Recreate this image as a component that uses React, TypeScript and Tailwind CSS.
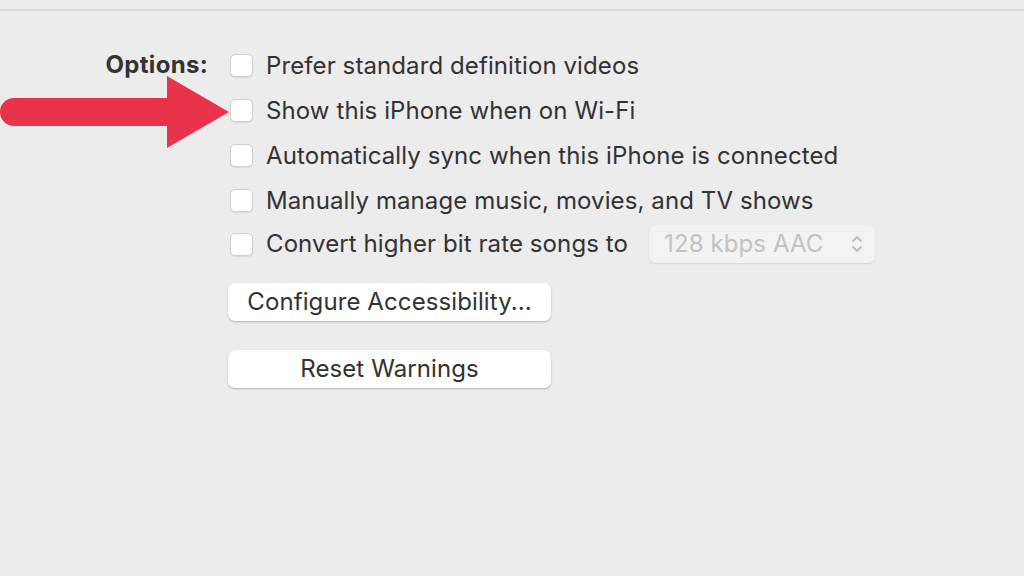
import React from "react";

const font = { fontFamily: "Inter, 'Noto Sans', sans-serif" };

function Checkbox() {
  return (
    <span className="block h-[23px] w-[23px] shrink-0 rounded-[5px] border border-[#cfcfcf] bg-white shadow-[0_1px_1px_rgba(0,0,0,0.08)]" />
  );
}

function Row({ label, children, h = "h-[45px]" }: { label: string; children?: React.ReactNode; h?: string }) {
  return (
    <div className={`flex items-center gap-[13px] ${h}`}>
      <Checkbox />
      <span className="whitespace-nowrap text-[#323232]">{label}</span>
      {children}
    </div>
  );
}

function Arrow() {
  return (
    <svg className="absolute left-0 top-[74px]" width="232" height="78" viewBox="0 0 232 78">
      <path d="M14 24 H167 V2 L229 38 L167 74 V52 H14 A14 14 0 0 1 14 24 Z" fill="#e8334a" />
    </svg>
  );
}

export default function App() {
  const rows = [
    "Prefer standard definition videos",
    "Show this iPhone when on Wi-Fi",
    "Automatically sync when this iPhone is connected",
    "Manually manage music, movies, and TV shows",
  ];

  return (
    <main
      className="relative h-[576px] w-[1024px] overflow-hidden bg-[#ececec] text-[24px] tracking-[0.1px]"
      style={font}
    >
      <div className="h-[11px] border-b-2 border-[#d9d9d9]" />

      <div className="flex pt-[32px]">
        <div className="w-[208px] pt-[9px] text-right font-bold leading-[26px] tracking-[0.3px] text-[#333]">Options:</div>
        <div className="ml-[22px] flex flex-col">
          {rows.map((r) => (
            <Row key={r} label={r} />
          ))}
          <Row label="Convert higher bit rate songs to" h="h-[42px]">
            <div className="ml-[8px] flex h-[38px] w-[226px] items-center justify-between rounded-[7px] bg-[#f3f3f3] pl-[15px] pr-[12px] text-[#c2c2c2] shadow-[0_1px_2px_rgba(0,0,0,0.1)]">
              <span>128 kbps AAC</span>
              <svg width="12" height="20" viewBox="0 0 12 20" fill="none" stroke="#bdbdbd" strokeWidth="2" strokeLinecap="round" strokeLinejoin="round">
                <path d="M2 7 L6 3 L10 7" />
                <path d="M2 13 L6 17 L10 13" />
              </svg>
            </div>
          </Row>

          <div className="-ml-[2px] mt-[18px] flex flex-col gap-[29px]">
            <button className="h-[38px] w-[323px] rounded-[7px] bg-white text-[#323232] shadow-[0_1px_2px_rgba(0,0,0,0.25)]">
              Configure Accessibility...
            </button>
            <button className="h-[38px] w-[323px] rounded-[7px] bg-white text-[#323232] shadow-[0_1px_2px_rgba(0,0,0,0.25)]">
              Reset Warnings
            </button>
          </div>
        </div>
      </div>

      <Arrow />
    </main>
  );
}
